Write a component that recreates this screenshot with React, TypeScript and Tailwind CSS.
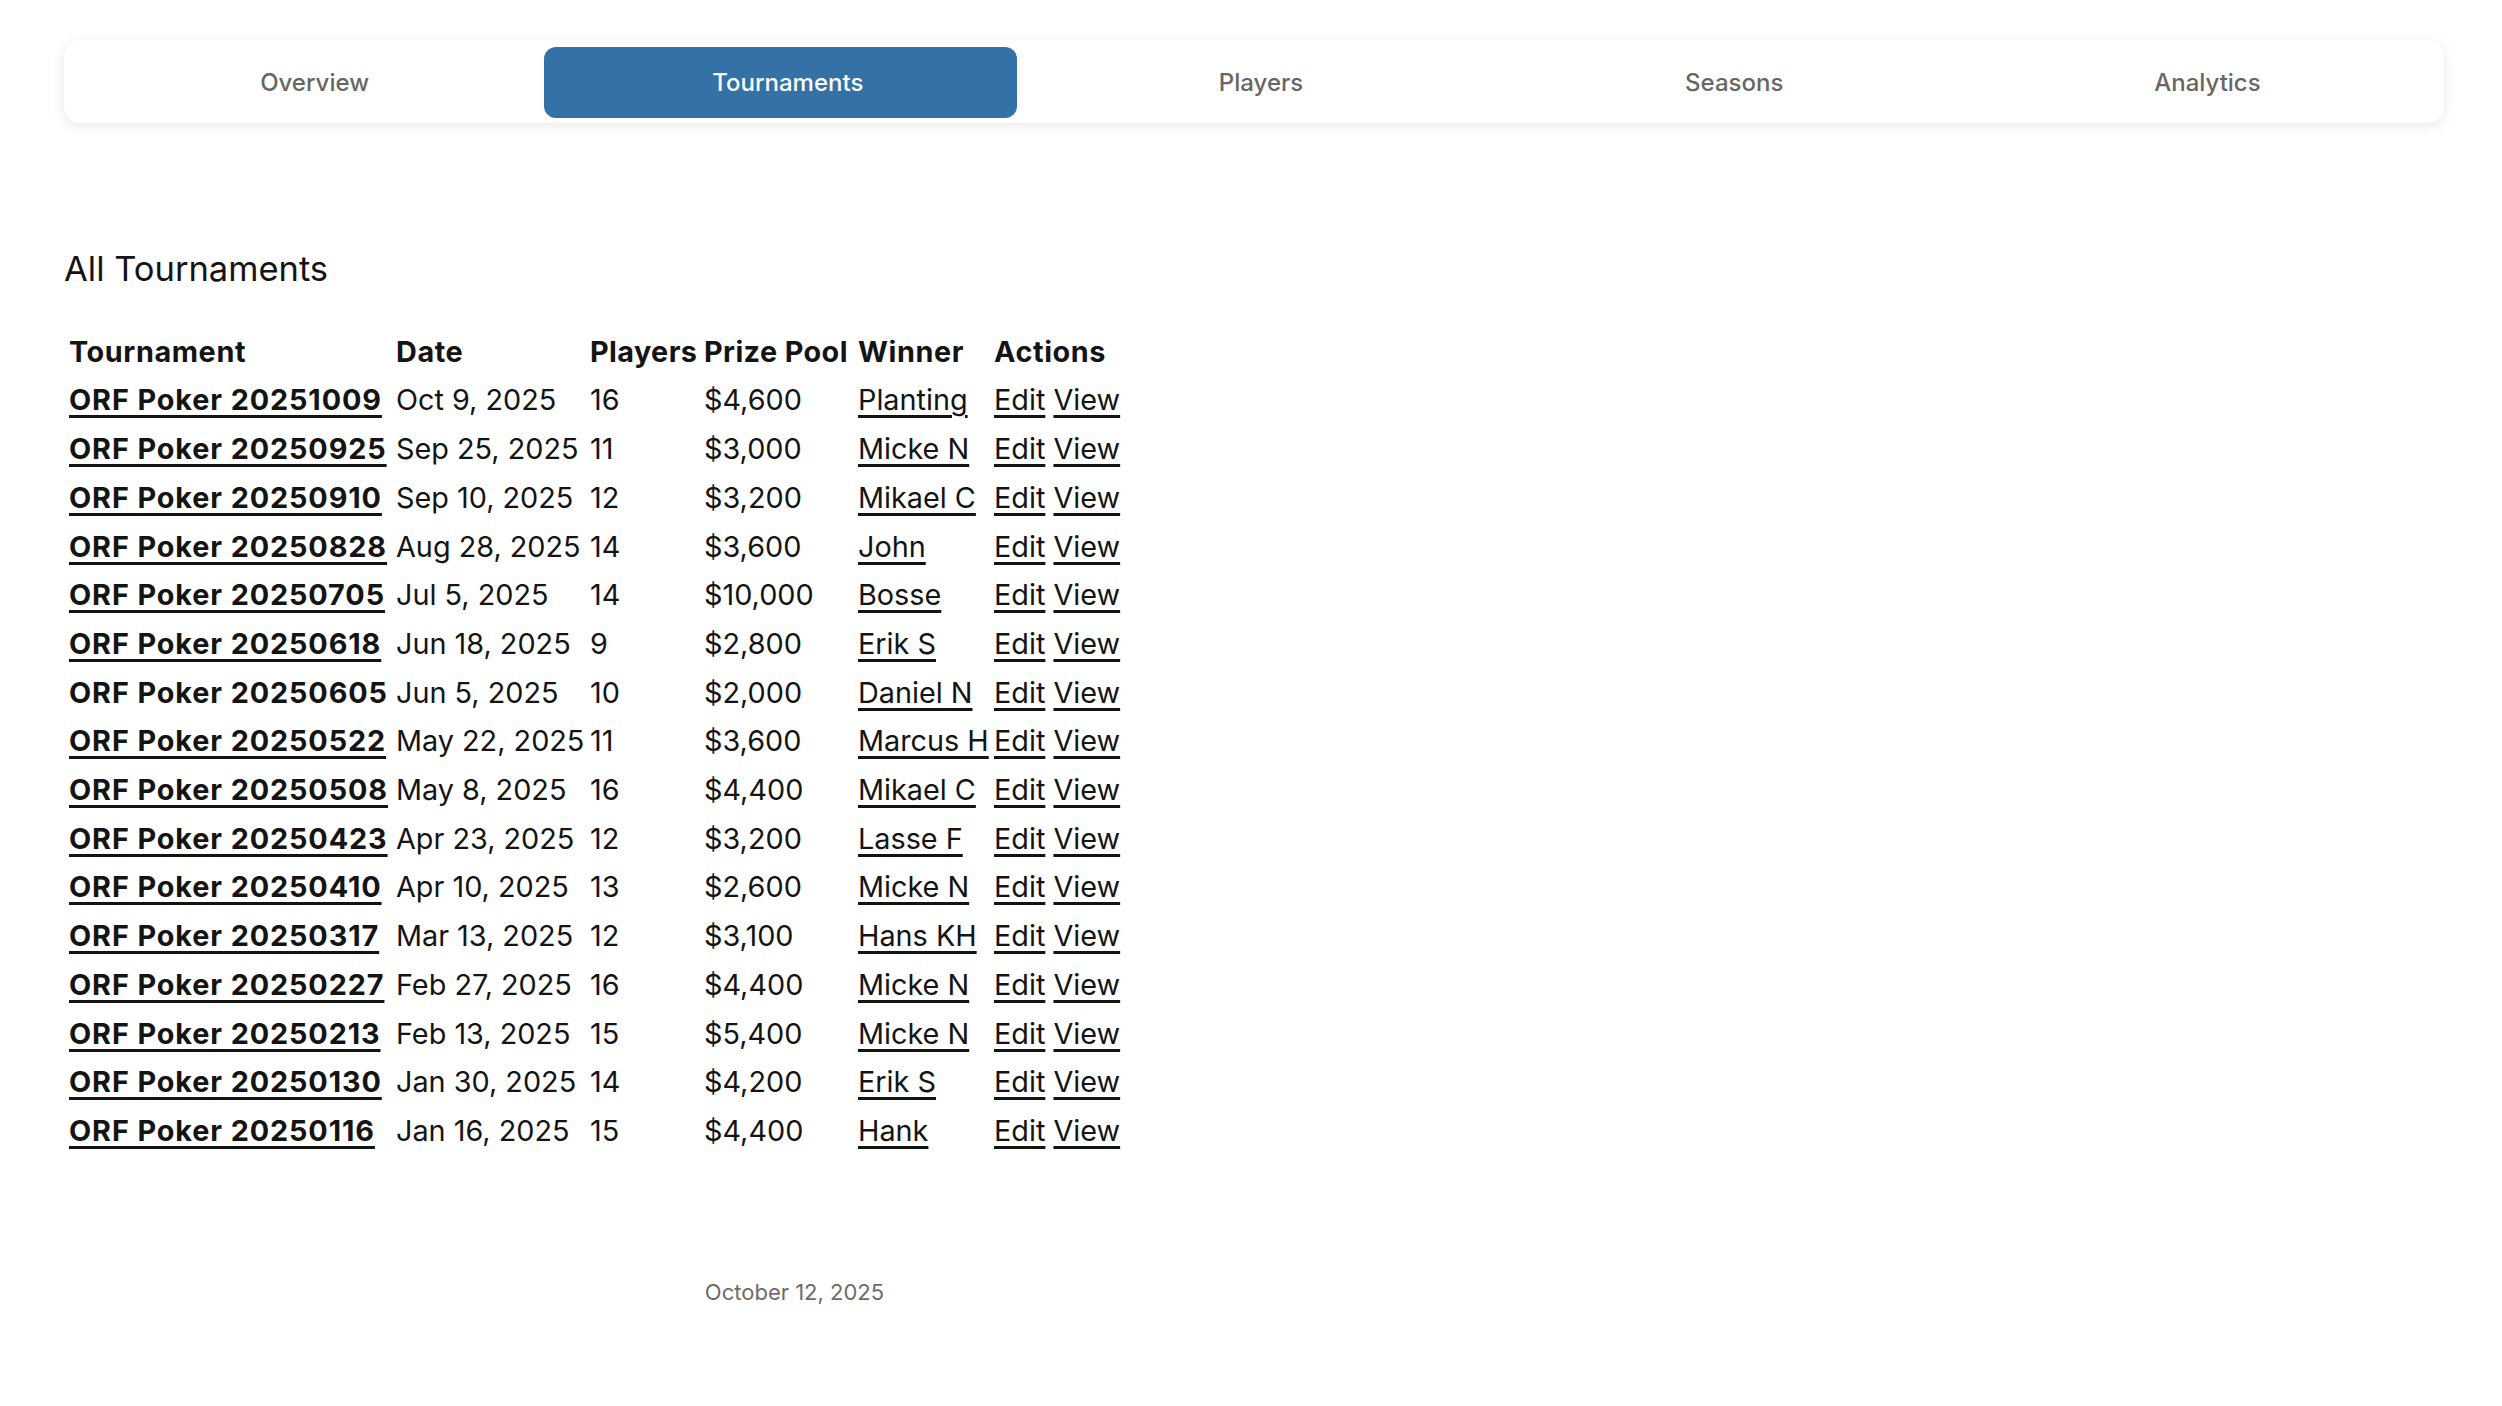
const tabs = ["Overview", "Tournaments", "Players", "Seasons", "Analytics"];

type Row = {
  name: string;
  date: string;
  players: number;
  pool: string;
  winner: string;
  linked?: boolean;
};

const rows: Row[] = [
  { name: "ORF Poker 20251009", date: "Oct 9, 2025", players: 16, pool: "$4,600", winner: "Planting" },
  { name: "ORF Poker 20250925", date: "Sep 25, 2025", players: 11, pool: "$3,000", winner: "Micke N" },
  { name: "ORF Poker 20250910", date: "Sep 10, 2025", players: 12, pool: "$3,200", winner: "Mikael C" },
  { name: "ORF Poker 20250828", date: "Aug 28, 2025", players: 14, pool: "$3,600", winner: "John" },
  { name: "ORF Poker 20250705", date: "Jul 5, 2025", players: 14, pool: "$10,000", winner: "Bosse" },
  { name: "ORF Poker 20250618", date: "Jun 18, 2025", players: 9, pool: "$2,800", winner: "Erik S" },
  { name: "ORF Poker 20250605", date: "Jun 5, 2025", players: 10, pool: "$2,000", winner: "Daniel N", linked: false },
  { name: "ORF Poker 20250522", date: "May 22, 2025", players: 11, pool: "$3,600", winner: "Marcus H" },
  { name: "ORF Poker 20250508", date: "May 8, 2025", players: 16, pool: "$4,400", winner: "Mikael C" },
  { name: "ORF Poker 20250423", date: "Apr 23, 2025", players: 12, pool: "$3,200", winner: "Lasse F" },
  { name: "ORF Poker 20250410", date: "Apr 10, 2025", players: 13, pool: "$2,600", winner: "Micke N" },
  { name: "ORF Poker 20250317", date: "Mar 13, 2025", players: 12, pool: "$3,100", winner: "Hans KH" },
  { name: "ORF Poker 20250227", date: "Feb 27, 2025", players: 16, pool: "$4,400", winner: "Micke N" },
  { name: "ORF Poker 20250213", date: "Feb 13, 2025", players: 15, pool: "$5,400", winner: "Micke N" },
  { name: "ORF Poker 20250130", date: "Jan 30, 2025", players: 14, pool: "$4,200", winner: "Erik S" },
  { name: "ORF Poker 20250116", date: "Jan 16, 2025", players: 15, pool: "$4,400", winner: "Hank" },
];

const link = "underline decoration-[2.5px] underline-offset-[5px]";

export default function App() {
  return (
    <div className="min-h-screen bg-white font-['Inter','Noto_Sans',sans-serif] text-[#141414]">
      <div className="pl-[64px] pr-[58px] pt-[40px]">
        <nav className="flex h-[83px] rounded-2xl bg-white px-[7px] pt-[7px] pb-[5px] shadow-[0_3px_14px_rgba(0,0,0,0.09)]">
          {tabs.map((t) => (
            <button
              key={t}
              className={
                t === "Tournaments"
                  ? "flex h-[71px] flex-1 items-center justify-center rounded-xl bg-[#3371a6] pl-[14px] text-[24px] font-medium text-white"
                  : "flex h-[71px] flex-1 items-center justify-center rounded-xl pl-[14px] text-[24px] font-medium text-[#666666]"
              }
            >
              {t}
            </button>
          ))}
        </nav>

        <h2 className="mt-[120px] text-[34.5px] leading-[51.75px]">All Tournaments</h2>

        <table className="mt-[33px] ml-[5px] text-[28.8px] leading-[48.7px]">
          <thead>
            <tr className="text-left">
              <th className="w-[327px] p-0 font-bold tracking-[0.6px]">Tournament</th>
              <th className="w-[194px] p-0 font-bold tracking-[0.6px]">Date</th>
              <th className="w-[114px] p-0 font-bold tracking-[0.4px] whitespace-nowrap">Players</th>
              <th className="w-[154px] p-0 font-bold tracking-[0.4px] whitespace-nowrap">Prize Pool</th>
              <th className="w-[136px] p-0 font-bold tracking-[0.6px]">Winner</th>
              <th className="p-0 font-bold tracking-[0.6px]">Actions</th>
            </tr>
          </thead>
          <tbody>
            {rows.map((r) => (
              <tr key={r.name}>
                <td className="p-0 font-bold tracking-[0.9px] whitespace-nowrap">
                  {r.linked === false ? r.name : <a className={link}>{r.name}</a>}
                </td>
                <td className="p-0 whitespace-nowrap">{r.date}</td>
                <td className="p-0">{r.players}</td>
                <td className="p-0">{r.pool}</td>
                <td className="p-0 whitespace-nowrap">
                  <a className={link}>{r.winner}</a>
                </td>
                <td className="p-0 whitespace-nowrap">
                  <a className={link}>Edit</a> <a className={link}>View</a>
                </td>
              </tr>
            ))}
          </tbody>
        </table>
      </div>

      <footer className="mt-[120px] ml-[64px] w-[1461px] text-center text-[22px] leading-[33.6px] text-[#6b6b6b]">
        October 12, 2025
      </footer>
    </div>
  );
}
